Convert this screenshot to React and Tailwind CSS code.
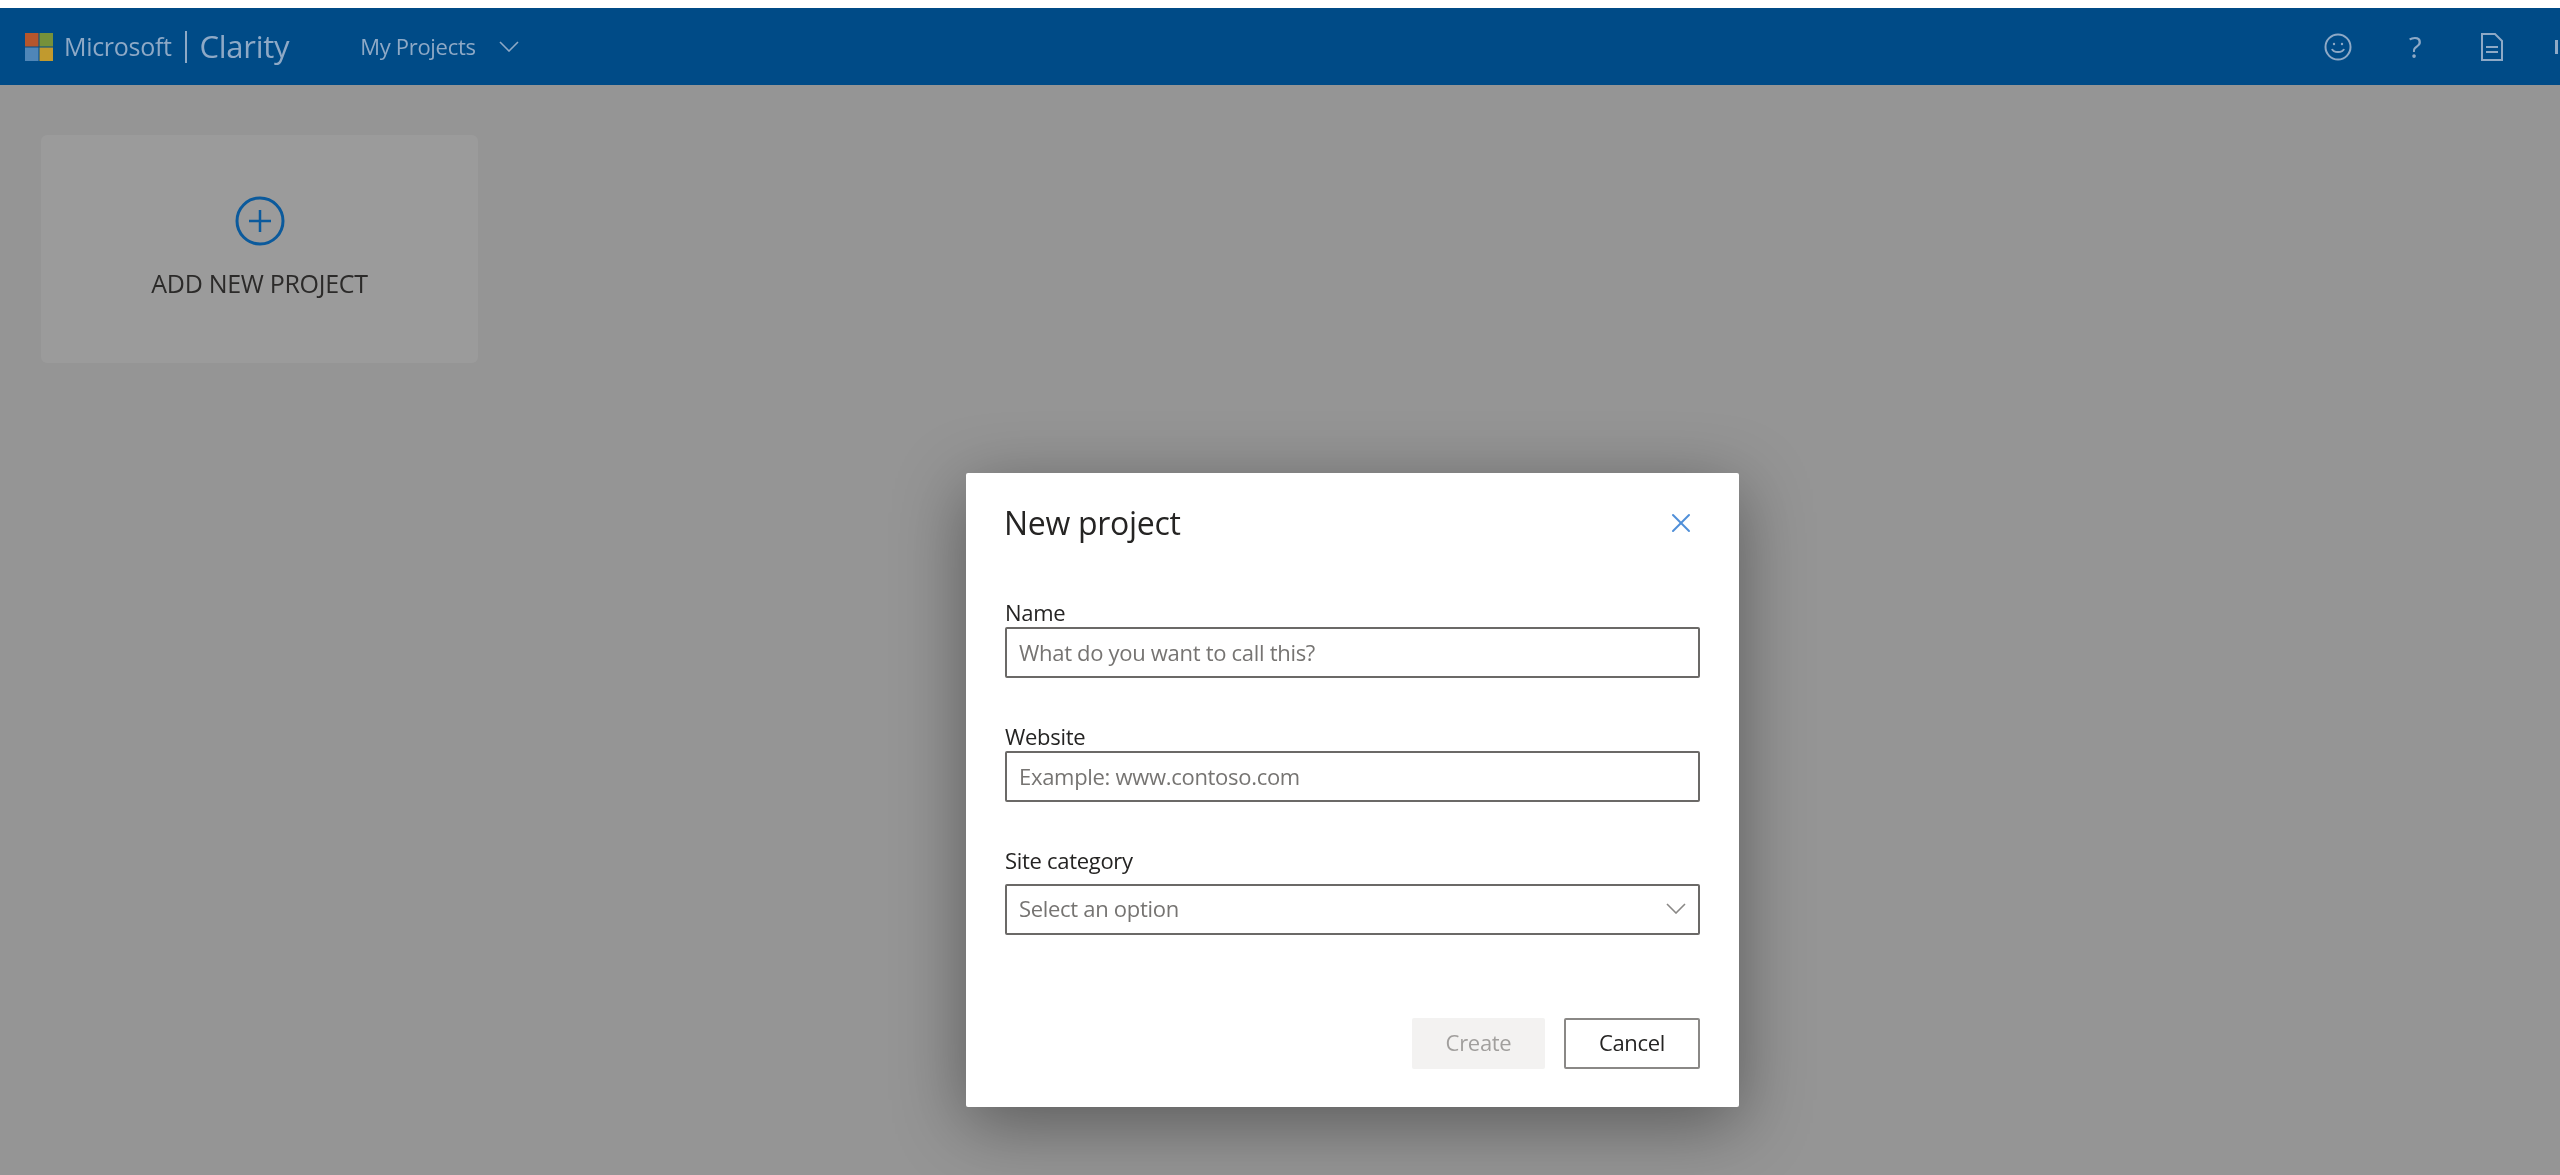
import React from "react";
import { X } from "lucide-react";

const Chevron = ({ className = "" }) => (
  <svg width="20" height="11" viewBox="0 0 20 11" fill="none" stroke="currentColor" strokeWidth="1.6" className={className}>
    <path d="M1 1l9 9 9-9" />
  </svg>
);

const Field = ({ label, placeholder, className = "" }) => (
  <div className={className}>
    <label className="block text-[22px] leading-[26px] font-medium -mt-[2px] mb-[2px] text-[#252423]">{label}</label>
    <input
      placeholder={placeholder}
      className="block w-full h-[51px] px-[12px] pb-[2px] border-2 border-[#6b6967] rounded-[2px] text-[22px] outline-none placeholder:text-[#767472]"
    />
  </div>
);

const App = () => {
  return (
    <div className="relative h-[1175px] overflow-hidden bg-white font-['Open_Sans',sans-serif] tracking-[-0.3px] blur-[0.4px]">
      <div className="h-[8px] bg-white" />

      {/* top bar */}
      <header className="h-[77px] bg-[#004b87] flex items-center pl-[25px] text-[#8ea9c6]">
        <svg width="28" height="28" viewBox="0 0 28 28" className="mr-[11px]">
          <rect width="13.5" height="13.5" fill="#b5562c" />
          <rect x="14.5" width="13.5" height="13.5" fill="#76913a" />
          <rect y="14.5" width="13.5" height="13.5" fill="#4f86b8" />
          <rect x="14.5" y="14.5" width="13.5" height="13.5" fill="#c19a2e" />
        </svg>
        <span className="text-[25px]">Microsoft</span>
        <div className="w-[2px] h-[32px] bg-[#8ea9c6] mx-[13px]" />
        <span className="text-[31px]">Clarity</span>
        <span className="text-[22px] ml-[71px]">My Projects</span>
        <Chevron className="ml-[23px]" />

        <div className="ml-auto flex items-center mr-[2px]">
          <svg width="28" height="28" viewBox="0 0 28 28" fill="none" stroke="currentColor" strokeWidth="2">
            <circle cx="14" cy="14" r="12.5" />
            <circle cx="10" cy="11" r="1.2" fill="currentColor" stroke="none" />
            <circle cx="18" cy="11" r="1.2" fill="currentColor" stroke="none" />
            <path d="M8 16c1.5 4 10.5 4 12 0" />
          </svg>
          <span className="ml-[55px] w-[16px] text-center text-[30px] leading-none">?</span>
          <svg width="24" height="28" viewBox="0 0 24 28" fill="none" stroke="currentColor" strokeWidth="2" className="ml-[57px]">
            <path d="M2 1h13l7 7v19H2z" />
            <path d="M6 14h12M6 19h12" />
          </svg>
          <div className="ml-[51px] w-[3px] h-[14px] bg-[#8ea9c6]" />
        </div>
      </header>

      {/* project list */}
      <main className="h-[1090px] bg-[#959595] pl-[41px] pt-[50px]">
        <div className="w-[437px] h-[228px] rounded-[6px] bg-[#9b9b9b] flex flex-col items-center pt-[61px]">
          <svg width="50" height="50" viewBox="0 0 50 50" fill="none" stroke="#0b5a9c" strokeWidth="3">
            <circle cx="25" cy="25" r="23" />
            <path d="M25 14v22M14 25h22" strokeWidth="2.5" />
          </svg>
          <span className="mt-[19px] text-[25px] font-medium text-[#2b2a29]">ADD NEW PROJECT</span>
        </div>
      </main>

      {/* new project dialog */}
      <div className="absolute left-[966px] top-[473px] w-[773px] h-[634px] bg-white rounded-[2px] shadow-[0_16px_70px_rgba(0,0,0,0.4)] px-[39px] pt-[29px]">
        <div className="flex items-center justify-between h-[42px]">
          <h2 className="text-[32px] font-medium -ml-[1px] text-[#252423]">New project</h2>
          <X size={32} strokeWidth={1.5} className="text-[#4f8fd8] mr-[3px]" />
        </div>
        <Field label="Name" placeholder="What do you want to call this?" className="mt-[57px]" />
        <Field label="Website" placeholder="Example: www.contoso.com" className="mt-[47px]" />
        <div className="mt-[47px]">
          <label className="block -mt-[2px] mb-[11px] text-[22px] leading-[26px] font-medium text-[#252423]">Site category</label>
          <div className="flex items-center justify-between h-[51px] pl-[12px] pr-[12px] pb-[2px] border-2 border-[#6b6967] rounded-[2px] text-[22px] text-[#767472]">
            <span>Select an option</span>
            <Chevron className="text-[#8a8886]" />
          </div>
        </div>
        <div className="flex justify-end gap-[19px] mt-[83px]">
          <button className="w-[133px] h-[51px] pb-[2px] bg-[#f3f2f1] rounded-[2px] text-[22px] text-[#a19f9d]">Create</button>
          <button className="w-[136px] h-[51px] pb-[2px] border-2 border-[#8a8886] rounded-[2px] text-[22px] text-[#252423]">Cancel</button>
        </div>
      </div>
    </div>
  );
};

export default App;
